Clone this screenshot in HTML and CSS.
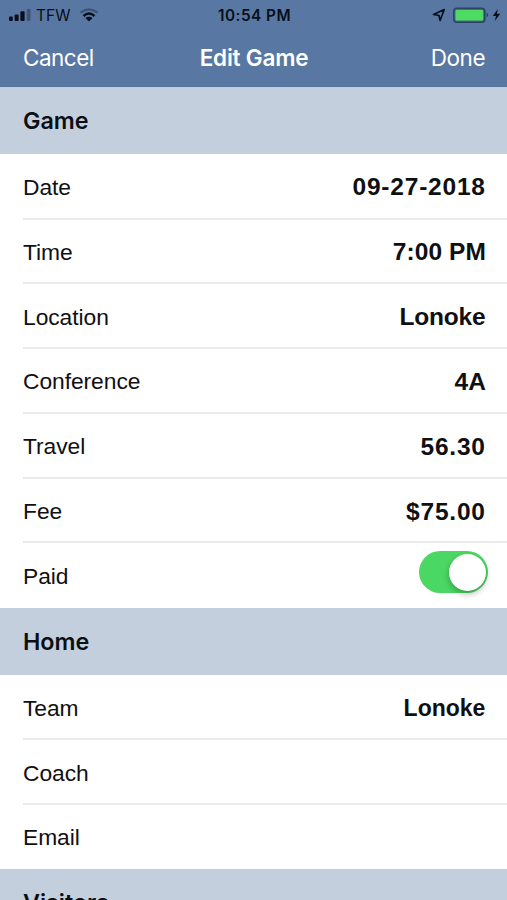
FILE: index.html
```html
<!DOCTYPE html>
<html lang="en">
<head>
<meta charset="utf-8">
<title>Edit Game</title>
<link rel="stylesheet" href="styles.css">
</head>
<body>
<div class="screen">
  <header class="top">
    <div class="status">
      <div class="left">
        <svg width="24" height="14" viewBox="0 0 24 14"><g fill="#080f19"><rect x="1" y="8.4" width="3.8" height="4.6" rx="1"/><rect x="6.6" y="6.4" width="4" height="6.6" rx="1"/><rect x="12.4" y="3.2" width="4.2" height="9.8" rx="1"/></g><rect x="18.8" y="1" width="3.8" height="12" rx="1" fill="#3f5673"/></svg>
        <span class="carrier">TFW</span>
        <svg class="wifi" width="20" height="14" viewBox="0 0 20 14" fill="none"><path d="M1.5 4.7Q10-2 18.5 4.7" stroke="#3a5274" stroke-width="2.2"/><path d="M4.5 8Q10 3.2 15.5 8" stroke="#080f19" stroke-width="2.4"/><path d="M6.5 10.1Q10 7.3 13.5 10.1L10 13.5Z" fill="#080f19"/></svg>
      </div>
      <span class="clock">10:54 PM</span>
      <div class="right">
        <svg width="14" height="14" viewBox="0 0 14 14"><path d="M1.5 6.5L12.2 1.6L8.1 12.5L7 7.5Z" fill="none" stroke="#080f19" stroke-width="1.6" stroke-linejoin="round"/></svg>
        <svg class="battery" width="38" height="17" viewBox="0 0 38 17"><rect x=".8" y="1.3" width="31" height="14" rx="3" fill="#4b698c" stroke="#2c4465" stroke-width="1.5"/><rect x="2.5" y="3" width="27.6" height="10.6" rx="1" fill="#4edb62"/><path d="M33.5 5.5Q37 8 33.5 10.5Z" fill="#2c4465"/></svg>
        <svg width="9" height="14" viewBox="0 0 9 14"><path d="M5.8 1L.8 8H4L2.8 13L8.2 5.8H4.8Z" fill="#080f19"/></svg>
      </div>
    </div>
    <nav class="nav"><span>Cancel</span><h1>Edit Game</h1><span class="done">Done</span></nav>
  </header>
  <h2>Game</h2>
  <section class="rows game">
    <div class="row"><span>Date</span><b class="num">09-27-2018</b></div>
    <div class="row"><span>Time</span><b>7:00 PM</b></div>
    <div class="row"><span>Location</span><b class="word">Lonoke</b></div>
    <div class="row"><span>Conference</span><b>4A</b></div>
    <div class="row"><span>Travel</span><b class="num">56.30</b></div>
    <div class="row"><span>Fee</span><b class="num">$75.00</b></div>
    <div class="row paid"><span>Paid</span><i class="switch"></i></div>
  </section>
  <h2>Home</h2>
  <section class="rows team">
    <div class="row"><span>Team</span><b class="word small">Lonoke</b></div>
    <div class="row"><span>Coach</span></div>
    <div class="row"><span>Email</span></div>
  </section>
  <h2>Visitors</h2>
</div>
</body>
</html>
```
FILE: styles.css
```css
* { box-sizing: border-box; }
body { margin: 0; background: #fff; }
.screen {
  width: 507px;
  height: 900px;
  overflow: hidden;
  color: #101012;
  font-family: "Liberation Sans", Arial, sans-serif;
}
.top { height: 87px; background: #5877a2; font-family: Inter, sans-serif; border-bottom: 1px solid #54749a; }
.status {
  display: grid;
  grid-template-columns: 1fr auto 1fr;
  align-items: center;
  height: 30px;
  padding: 0 6px 0 8px;
  color: #080f19;
}
.left, .right { display: flex; align-items: center; }
.right { justify-content: flex-end; }
.carrier { margin-left: 4px; font-size: 15.5px; letter-spacing: .1px; }
.wifi { margin-left: 8px; }
.clock { font-size: 15.3px; font-weight: 600; letter-spacing: .5px; }
.battery { margin: 0 1px 0 7px; }
.nav {
  display: grid;
  grid-template-columns: 1fr auto 1fr;
  align-items: center;
  height: 55px;
  padding: 0 22px 0 23px;
  color: #fff;
  font-size: 22.5px;
  letter-spacing: -.5px;
}
.nav h1 { margin: 0; font-size: 22.5px; font-weight: 600; letter-spacing: -.2px; }
.done { text-align: right; }
h2 {
  margin: 0;
  height: 67px;
  padding: 0 0 0 23px;
  background: #c4cfde;
  font: 600 23.3px/67px Inter, sans-serif;
  color: #0b0f14;
}
.rows { display: grid; padding-left: 23px; }
.game { height: 454px; grid-template-rows: 65.5px repeat(5, 64.8px) 1fr; }
.team { height: 194px; grid-template-rows: 65.4px 65px 1fr; }
.row {
  display: flex;
  align-items: center;
  justify-content: space-between;
  padding: 3px 22px 0 0;
  border-bottom: 2px solid #ebebec;
  font-size: 22.8px;
  letter-spacing: -.05px;
}
.row:last-child { border-bottom: 0; padding-top: 1px; }
.row b { letter-spacing: .1px; margin-right: -1px; font-size: 24.5px; }
.row .num { letter-spacing: .8px; margin-right: -.8px; }
.row .word { letter-spacing: -.2px; margin-right: -.4px; }
.row .small { font-size: 23px; letter-spacing: 0; }
.row.paid { padding-right: 19px; }
.switch {
  width: 69px;
  height: 42px;
  padding: 2.5px;
  margin-top: -8px;
  border-radius: 21px;
  background: #4bd763;
}
.switch::after {
  content: "";
  display: block;
  width: 37px;
  height: 37px;
  margin-left: auto;
  border-radius: 50%;
  background: #fff;
  box-shadow: 0 3px 6px rgba(0, 0, 0, .28);
}
```
